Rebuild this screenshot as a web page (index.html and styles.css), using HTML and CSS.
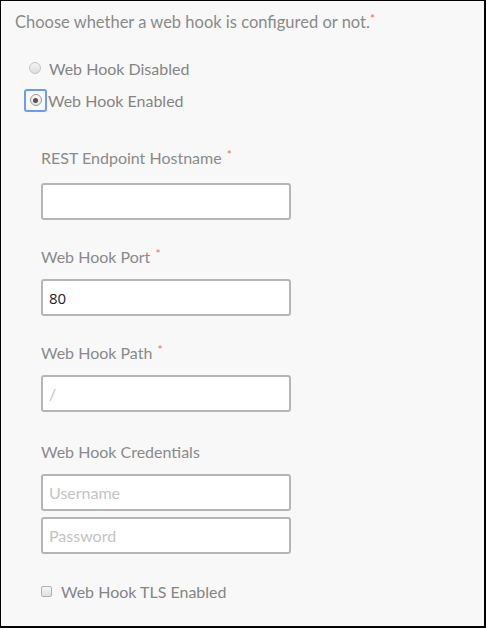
FILE: index.html
```html
<!DOCTYPE html>
<html>
<head>
<meta charset="utf-8">
<link rel="stylesheet" href="styles.css">
</head>
<body>
<div class="frame">
  <p class="question">Choose whether a web hook is configured or not.<span class="req">*</span></p>
  <div class="radios">
    <label class="radio-row"><span class="radio"></span><span class="radio-text">Web Hook Disabled</span></label>
    <label class="radio-row"><span class="focus"><span class="radio checked"></span></span><span class="radio-text tight">Web Hook Enabled</span></label>
  </div>
  <div class="fields">
    <div class="field first">
      <div class="label">REST Endpoint Hostname <span class="req">*</span></div>
      <div class="input"></div>
    </div>
    <div class="field">
      <div class="label">Web Hook Port <span class="req">*</span></div>
      <div class="input value">80</div>
    </div>
    <div class="field">
      <div class="label">Web Hook Path <span class="req">*</span></div>
      <div class="input placeholder">/</div>
    </div>
    <div class="field credentials">
      <div class="label">Web Hook Credentials</div>
      <div class="input placeholder">Username</div>
      <div class="input placeholder second">Password</div>
    </div>
    <label class="check-row"><span class="checkbox"></span><span class="check-text">Web Hook TLS Enabled</span></label>
  </div>
</div>
</body>
</html>
```
FILE: styles.css
```css
html, body {
  margin: 0;
  padding: 0;
  background: #000;
}
.frame {
  box-sizing: border-box;
  width: 486px;
  height: 628px;
  border-top: 1px solid #000;
  border-left: 1px solid #000;
  border-right: 2px solid #000;
  border-bottom: 2px solid #000;
  background: #f8f8f8;
  font-family: "Source Sans Pro", Lato, "Noto Sans", sans-serif;
  color: #8a8a8a;
  font-size: 16px;
}
.question {
  margin: 0;
  padding: 11px 0 0 14px;
  line-height: 20px;
  font-size: 16.5px;
}
.req {
  color: #e8705f;
  font-size: 12px;
  vertical-align: top;
  line-height: 14px;
}
.radios {
  display: flex;
  flex-direction: column;
  padding: 20px 0 0 23px;
}
.radio-row {
  display: flex;
  align-items: center;
  height: 32px;
}
.radio-row:first-child {
  padding-left: 5px;
}
.radio {
  box-sizing: border-box;
  width: 12px;
  height: 12px;
  border-radius: 50%;
  border: 1px solid #c4c4c4;
  background: linear-gradient(#f4f4f4, #dedede);
  display: inline-block;
  position: relative;
}
.radio.checked {
  border-color: #9a9a9a;
  background: linear-gradient(#fafafa, #e4e4e4);
}
.radio.checked::after {
  content: "";
  position: absolute;
  left: 2.5px;
  top: 2.5px;
  width: 5px;
  height: 5px;
  border-radius: 50%;
  background: #555;
}
.focus {
  box-sizing: border-box;
  width: 23px;
  height: 23px;
  border: 2px solid #6b9cf5;
  border-radius: 3px;
  display: flex;
  align-items: center;
  justify-content: center;
}
.radio-text {
  margin-left: 8px;
  color: #858585;
  font-size: 16px;
}
.radio-text.tight {
  margin-left: 1px;
}
.fields {
  padding: 32px 0 0 40px;
  display: flex;
  flex-direction: column;
}
.field {
  display: flex;
  flex-direction: column;
  margin-bottom: 27px;
}
.field.credentials {
  margin-top: 3px;
}
.label {
  line-height: 20px;
  color: #8a8a8a;
  margin-bottom: 12px;
}
.field.first .label {
  margin-bottom: 15px;
}
.label .req {
  margin-left: 1px;
}
.input {
  box-sizing: border-box;
  width: 250px;
  height: 37px;
  border: 2px solid #b5b5b5;
  border-radius: 3px;
  background: #fff;
  padding: 0 6px;
  display: flex;
  align-items: center;
  font-size: 16px;
}
.input.value {
  color: #222;
  font-family: "Open Sans", "Noto Sans", sans-serif;
  font-size: 15px;
}
.input.placeholder {
  color: #c4c4c4;
}
.input.second {
  margin-top: 6px;
}
.check-row {
  display: flex;
  align-items: center;
  margin-top: 1px;
}
.checkbox {
  box-sizing: border-box;
  width: 11px;
  height: 11px;
  border: 1px solid #b0b0b0;
  border-radius: 2px;
  background: linear-gradient(#f6f6f6, #e0e0e0);
  display: inline-block;
}
.check-text {
  margin-left: 9px;
  color: #858585;
}
```
